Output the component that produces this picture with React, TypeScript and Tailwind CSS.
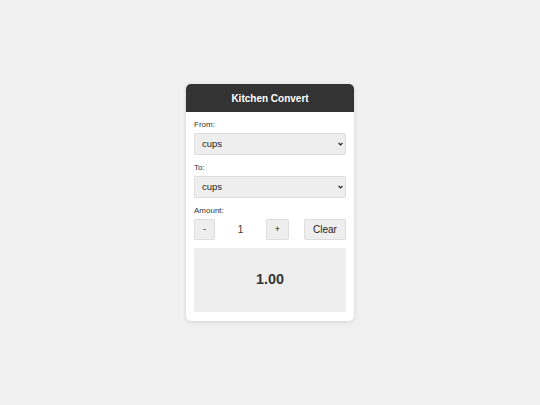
import React, { useState } from 'react';

const units = ['cups', 'tablespoons', 'teaspoons', 'milliliters', 'liters', 'ounces', 'grams'];

const fieldLabel = 'block text-[8px] leading-[10px] text-[#333] mb-[3px]';
const selectCls =
  'block w-full h-[22px] pl-[7px] pr-[12px] text-[9.5px] text-[#222] bg-[#eeeeee] border border-[#dddddd] rounded-[2px] outline-none appearance-none';
const btnCls =
  'h-[21px] bg-[#eeeeee] border border-[#dddddd] rounded-[2px] text-[#222] flex items-center justify-center';

function UnitSelect({ value, onChange }: { value: string; onChange: (v: string) => void }) {
  return (
    <div className="relative">
      <select className={selectCls} value={value} onChange={(e) => onChange(e.target.value)}>
        {units.map((u) => (
          <option key={u}>{u}</option>
        ))}
      </select>
      {/* small native-looking chevron */}
      <svg
        className="absolute right-[3px] top-1/2 -translate-y-1/2 pointer-events-none"
        width="5"
        height="4"
        viewBox="0 0 5 4"
      >
        <path d="M0.6 1 L2.5 3 L4.4 1" fill="none" stroke="#222" strokeWidth="1.2" />
      </svg>
    </div>
  );
}

export default function App() {
  const [from, setFrom] = useState('cups');
  const [to, setTo] = useState('cups');
  const [amount, setAmount] = useState(1);

  return (
    <div className="min-h-screen bg-[#f0f0f0] flex items-center justify-center font-['Liberation_Sans',Arial,sans-serif]">
      <div className="w-[168px] bg-white rounded-[5px] shadow-[0_1px_4px_rgba(0,0,0,0.12)] overflow-hidden">
        {/* Header */}
        <div className="h-[28px] bg-[#333333] flex items-center justify-center">
          <h1 className="text-[10px] font-bold text-white">Kitchen Convert</h1>
        </div>

        {/* Content */}
        <div className="px-[8px] pt-[8px] pb-[9px]">
          <div className="mb-[8px]">
            <label className={fieldLabel}>From:</label>
            <UnitSelect value={from} onChange={setFrom} />
          </div>

          <div className="mb-[8px]">
            <label className={fieldLabel}>To:</label>
            <UnitSelect value={to} onChange={setTo} />
          </div>

          <div className="mb-[8px]">
            <label className={fieldLabel}>Amount:</label>
            <div className="flex items-center gap-[8px]">
              <button className={`${btnCls} w-[21px] text-[9px]`} onClick={() => setAmount((a) => Math.max(0, a - 1))}>
                -
              </button>
              <input
                type="text"
                readOnly
                value={amount}
                className="w-[35px] h-[21px] text-center text-[10px] text-[#333] bg-transparent outline-none"
              />
              <button className={`${btnCls} w-[23px] text-[9px]`} onClick={() => setAmount((a) => a + 1)}>
                +
              </button>
              <button className={`${btnCls} ml-auto w-[42px] text-[10px]`} onClick={() => setAmount(1)}>
                Clear
              </button>
            </div>
          </div>

          <div className="h-[64px] bg-[#eeeeee] rounded-[2px] flex items-center justify-center">
            <span className="text-[14.4px] font-bold text-[#333]">{amount.toFixed(2)}</span>
          </div>
        </div>
      </div>
    </div>
  );
}
